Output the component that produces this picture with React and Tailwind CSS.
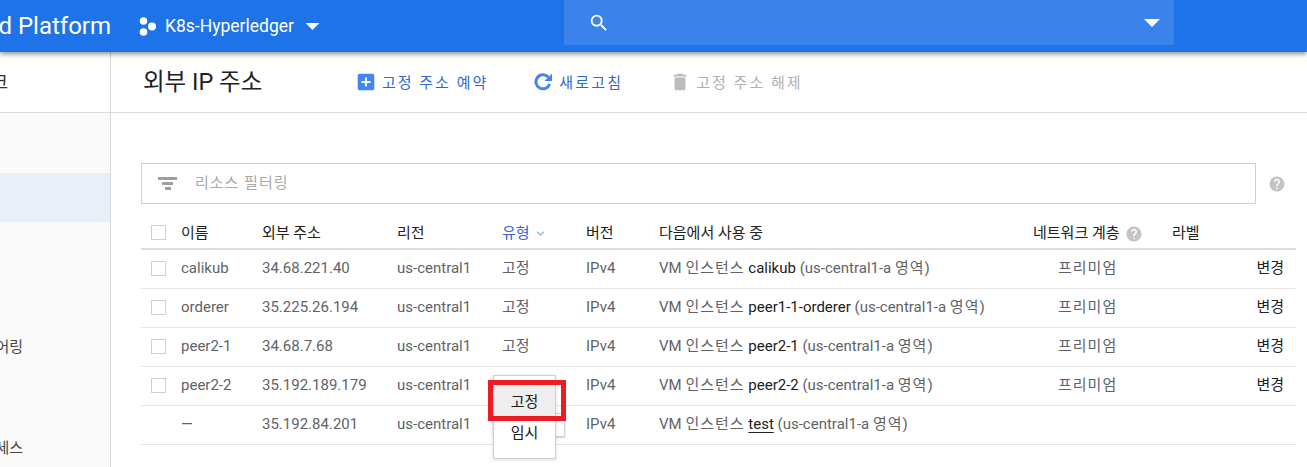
import { MdAddBox, MdDelete, MdHelp, MdSearch, MdKeyboardArrowDown } from "react-icons/md";

const FONT = "font-['Roboto','Noto_Sans_CJK_KR',sans-serif]";
const GRID = "grid grid-cols-[40px_81px_135px_105px_84px_73px_374px_139px_1fr] items-center";

const rows = [
  { name: "calikub", ip: "34.68.221.40", type: "고정", vm: "calikub", tier: true },
  { name: "orderer", ip: "35.225.26.194", type: "고정", vm: "peer1-1-orderer", tier: true },
  { name: "peer2-1", ip: "34.68.7.68", type: "고정", vm: "peer2-1", tier: true },
  { name: "peer2-2", ip: "35.192.189.179", type: "", vm: "peer2-2", tier: true },
  { name: "—", ip: "35.192.84.201", type: "", vm: "test", tier: false, noCheck: true, underline: true },
];

function Check() {
  return <span className="block h-[15px] w-[15px] border border-[#d0d0d0] bg-white" />;
}

function Caret({ className }) {
  return (
    <svg viewBox="0 0 16 8" className={className} fill="currentColor">
      <path d="M0 0h16L8 8z" />
    </svg>
  );
}

function Sidebar() {
  return (
    <aside className="flex w-[111px] shrink-0 flex-col overflow-hidden border-r border-[#d8d8d8] bg-[#fafafa] text-[#444]">
      <div className="flex h-[61px] items-center justify-end border-b border-[#dcdcdc] bg-white pr-[102px] text-[18px] text-[#333]">
        <span className="whitespace-nowrap">VPC 네트워크</span>
      </div>
      <div className="mt-[60px] h-[49px] bg-[#e9eff9]" />
      <div className="mt-[114px] flex justify-end pr-[87px] text-[15px]">
        <span className="whitespace-nowrap">VPC 네트워크 피어링</span>
      </div>
      <div className="mt-[78px] flex justify-end pr-[87px] text-[15px]">
        <span className="whitespace-nowrap">공유 액세스</span>
      </div>
    </aside>
  );
}

function Header() {
  return (
    <header className="relative z-10 flex h-[52px] items-center bg-[#1e73e8] text-white shadow-[0_2px_5px_rgba(0,0,0,0.45)]">
      <div className="flex w-[111px] shrink-0 justify-end overflow-hidden">
        <span className="whitespace-nowrap text-[24px]">Google Cloud Platform</span>
      </div>
      <div className="ml-[28px] flex w-[425px] shrink-0 items-center">
        <svg viewBox="0 0 17 19" className="h-[19px] w-[17px]" fill="white">
          <circle cx="4.5" cy="4" r="3.8" />
          <circle cx="4.5" cy="15" r="3.8" />
          <circle cx="13" cy="9.5" r="4" />
        </svg>
        <span className="ml-[9px] text-[17.5px]">K8s-Hyperledger</span>
        <Caret className="ml-[11px] h-[7px] w-[15px]" />
      </div>
      <div className="mb-[7px] flex h-[45px] w-[610px] items-center justify-between rounded-b-[2px] bg-[#3b83ea] pl-[24px] pr-[14px]">
        <MdSearch className="h-[22px] w-[22px]" />
        <Caret className="h-[8px] w-[16px]" />
      </div>
    </header>
  );
}

function Toolbar() {
  return (
    <div className="flex h-[61px] items-center border-b border-[#dcdcdc] pl-[32px] text-[15px]">
      <h1 className="w-[212px] pt-[2px] text-[23.5px] text-[#212121]">외부 IP 주소</h1>
      <button className="flex items-center text-[#3367d6]">
        <MdAddBox className="h-[22px] w-[22px] text-[#4285f4]" />
        <span className="ml-[5px] pt-[2px] tracking-[2px]">고정 주소 예약</span>
      </button>
      <button className="ml-[46px] flex items-center text-[#3367d6]">
        <svg viewBox="0 0 18 18" className="h-[18px] w-[18px] text-[#4285f4]" fill="none" stroke="currentColor">
          <path d="M14.2 4.2A7 7 0 1 0 15.6 11" strokeWidth="3" />
          <path d="M10.5 8H18V0.5z" fill="currentColor" stroke="none" />
        </svg>
        <span className="ml-[7px] pt-[2px] tracking-[2.2px]">새로고침</span>
      </button>
      <button className="ml-[46px] flex items-center text-[#b0b0b0]">
        <MdDelete className="h-[22px] w-[22px] text-[#bdbdbd]" />
        <span className="ml-[5px] pt-[2px] tracking-[2px]">고정 주소 해제</span>
      </button>
    </div>
  );
}

function Row({ row }) {
  return (
    <div className={`${GRID} h-[39px] border-b border-[#e6e6e6] pb-[2px] text-[15px] text-[#5f6368]`}>
      <div className="pl-[10px]">{!row.noCheck && <Check />}</div>
      <div>{row.name}</div>
      <div>{row.ip}</div>
      <div>us-central1</div>
      <div>{row.type}</div>
      <div>IPv4</div>
      <div className="whitespace-nowrap">
        VM <span className="tracking-[1px]">인스턴스</span>{" "}
        <span className={row.underline ? "text-[#212121] underline decoration-[#212121] underline-offset-[3px]" : "text-[#212121]"}>{row.vm}</span>{" "}
        (us-central1-a <span className="tracking-[1px]">영역</span>)
      </div>
      <div className="pl-[25px] tracking-[1px]">{row.tier && "프리미엄"}</div>
      <div className="pr-[12px] text-right text-[#212121]">{row.tier && "변경"}</div>
    </div>
  );
}

function Table() {
  return (
    <div className="relative mr-[11px] ml-[30px] mt-[13px]">
      <div className={`${GRID} h-[33px] border-b-2 border-[#dcdcdc] pt-[2px] text-[15px] text-[#212121]`}>
        <div className="pb-[2px] pl-[10px]"><Check /></div>
        <div>이름</div>
        <div>외부 주소</div>
        <div>리전</div>
        <div className="flex items-center text-[#3367d6]">
          유형
          <MdKeyboardArrowDown className="ml-[3px] h-[15px] w-[15px] text-[#8ab0ea]" />
        </div>
        <div>버전</div>
        <div>다음에서 사용 중</div>
        <div className="flex items-center">
          네트워크 계층
          <MdHelp className="ml-[5px] h-[18px] w-[18px] text-[#c4c4c4]" />
        </div>
        <div>라벨</div>
      </div>
      {rows.map((row) => <Row key={row.ip} row={row} />)}

      {/* type dropdown open on the peer2-2 row */}
      <div className="absolute left-[352px] top-[196px] h-[24px] w-[72px] rounded-[1px] border border-[#d0d0d0] bg-white shadow-[0_1px_2px_rgba(0,0,0,0.2)]" />
      <div className="absolute left-[352px] top-[158px] flex h-[84px] w-[63px] flex-col border border-[#d0d0d0] bg-white pt-[7px] text-[15px] text-[#212121] shadow-[0_1px_3px_rgba(0,0,0,0.15)]">
        <div className="flex h-[36px] items-center justify-center bg-[#eeeeee] pt-[3px]">고정</div>
        <div className="flex h-[28px] items-center justify-center">임시</div>
      </div>
      <div className="absolute left-[347px] top-[163px] h-[41px] w-[78px] border-[5px] border-[#ed1c24]" />
    </div>
  );
}

export default function App() {
  return (
    <div className={`${FONT} flex h-[467px] w-[1307px] flex-col overflow-hidden bg-white`}>
      <Header />
      <div className="flex min-h-0 flex-1">
        <Sidebar />
        <main className="min-w-0 flex-1">
          <Toolbar />
          <div className="mt-[50px] flex items-center pl-[30px]">
            <div className="flex h-[41px] w-[1115px] items-center border border-[#d0d0d0] pl-[16px] text-[15px] text-[#a8a8a8]">
              <svg viewBox="0 0 19 14" className="h-[14px] w-[19px]" fill="#9e9e9e">
                <rect x="0" y="0" width="19" height="3" />
                <rect x="4" y="5" width="11" height="3" />
                <rect x="7" y="10" width="6" height="3" />
              </svg>
              <span className="ml-[18px] tracking-[1px]">리소스 필터링</span>
            </div>
            <MdHelp className="ml-[12px] h-[18px] w-[18px] text-[#c4c4c4]" />
          </div>
          <Table />
        </main>
      </div>
    </div>
  );
}
